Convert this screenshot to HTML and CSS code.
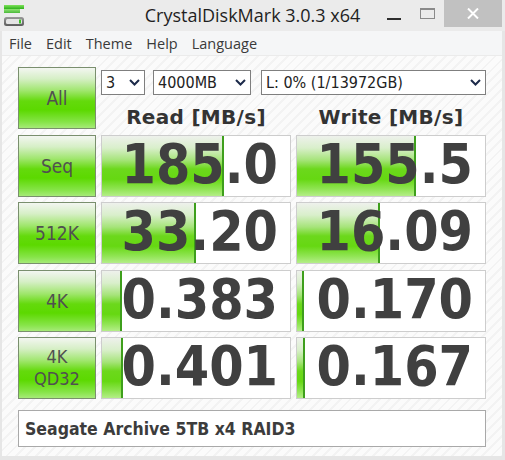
FILE: index.html
```html
<!DOCTYPE html>
<html>
<head>
<meta charset="utf-8">
<link rel="stylesheet" href="styles.css">
</head>
<body>
<div class="window">
  <div class="titlebar">
    <div class="iconcell">
      <svg class="appicon" width="22" height="22" viewBox="0 0 22 22">
        <defs>
          <linearGradient id="gg" x1="0" y1="0" x2="0" y2="1">
            <stop offset="0" stop-color="#7ee25a"/>
            <stop offset="1" stop-color="#2fb11c"/>
          </linearGradient>
          <linearGradient id="dg" x1="0" y1="0" x2="0" y2="1">
            <stop offset="0" stop-color="#9a9a9a"/>
            <stop offset="1" stop-color="#5c5c5c"/>
          </linearGradient>
        </defs>
        <rect x="0" y="0" width="20" height="4" fill="url(#gg)"/>
        <rect x="0" y="4" width="16" height="4" fill="url(#gg)" opacity="0.85"/>
        <rect x="0" y="12" width="20" height="9" rx="2.5" fill="url(#dg)"/>
        <rect x="2" y="14" width="16" height="5" rx="1.5" fill="#e4e4e4"/>
        <rect x="15" y="14.5" width="2" height="4" fill="#3cc226"/>
      </svg>
    </div>
    <div class="title">CrystalDiskMark 3.0.3 x64</div>
    <div class="controls">
      <div class="ctl min"><span class="minline"></span></div>
      <div class="ctl max"><span class="maxbox"></span></div>
      <div class="ctl close">
        <svg width="12" height="11" viewBox="0 0 12 11"><path d="M1 0.5 L11 10.5 M11 0.5 L1 10.5" stroke="#fff" stroke-width="2" fill="none"/></svg>
      </div>
    </div>
  </div>
  <div class="client">
    <div class="menubar">
      <span class="mi">File</span>
      <span class="mi">Edit</span>
      <span class="mi">Theme</span>
      <span class="mi">Help</span>
      <span class="mi">Language</span>
    </div>
    <div class="main">
      <div class="grid">
        <div class="btn comic">All</div>
        <div class="topcell">
          <div class="selects">
            <div class="sel s1"><span>3</span><svg class="chev" width="11" height="7" viewBox="0 0 11 7"><path d="M1 1 L5.5 5.5 L10 1" stroke="#1c2a4a" stroke-width="2" fill="none"/></svg></div>
            <div class="sel s2"><span>4000MB</span><svg class="chev" width="11" height="7" viewBox="0 0 11 7"><path d="M1 1 L5.5 5.5 L10 1" stroke="#1c2a4a" stroke-width="2" fill="none"/></svg></div>
            <div class="sel s3"><span>L: 0% (1/13972GB)</span><svg class="chev" width="11" height="7" viewBox="0 0 11 7"><path d="M1 1 L5.5 5.5 L10 1" stroke="#1c2a4a" stroke-width="2" fill="none"/></svg></div>
          </div>
          <div class="heads">
            <div class="head">Read [MB/s]</div>
            <div class="head">Write [MB/s]</div>
          </div>
        </div>

        <div class="btn comic">Seq</div>
        <div class="val"><div class="bar" style="width:122px"></div><span class="num">185.0</span></div>
        <div class="val"><div class="bar" style="width:119px"></div><span class="num">155.5</span></div>

        <div class="btn">512K</div>
        <div class="val"><div class="bar" style="width:94px"></div><span class="num">33.20</span></div>
        <div class="val"><div class="bar" style="width:83px"></div><span class="num">16.09</span></div>

        <div class="btn">4K</div>
        <div class="val"><div class="bar" style="width:20px"></div><span class="num">0.383</span></div>
        <div class="val"><div class="bar" style="width:7px"></div><span class="num">0.170</span></div>

        <div class="btn two">4K<br>QD32</div>
        <div class="val"><div class="bar" style="width:21px"></div><span class="num">0.401</span></div>
        <div class="val"><div class="bar" style="width:8px"></div><span class="num">0.167</span></div>
      </div>
      <div class="comment">Seagate Archive 5TB x4 RAID3</div>
    </div>
  </div>
</div>
</body>
</html>
```
FILE: styles.css
```css
* { box-sizing: border-box; }
html, body { margin: 0; padding: 0; }
body {
  width: 505px;
  height: 460px;
  overflow: hidden;
  background: #e6e6e6;
  font-family: "Open Sans", sans-serif;
}
.window {
  display: flex;
  flex-direction: column;
  height: 460px;
}
.titlebar {
  height: 31px;
  flex: none;
  display: grid;
  grid-template-columns: 1fr auto 1fr;
  background: #ebebeb;
}
.iconcell { display: flex; }
.appicon { margin: 5px 0 0 4px; }
.title {
  font-size: 18px;
  line-height: 31px;
  color: #1f1f1f;
  white-space: nowrap;
}
.controls {
  justify-self: end;
  display: flex;
  align-items: flex-start;
  margin-right: 3px;
}
.ctl {
  height: 27px;
  display: flex;
  justify-content: center;
}
.min { width: 32px; align-items: flex-start; }
.minline {
  display: block;
  width: 14px;
  height: 2px;
  background: #2e2e2e;
  margin-top: 18px;
}
.max { width: 34px; align-items: flex-start; }
.maxbox {
  display: block;
  width: 15px;
  height: 11px;
  border: 1px solid #8a8a8a;
  border-top-width: 2px;
  margin-top: 8px;
}
.close {
  width: 58px;
  background: #c1c1c1;
  align-items: center;
}
.client {
  flex: 1;
  display: flex;
  flex-direction: column;
  margin: 0 3px 4px 2px;
}
.menubar {
  height: 25px;
  flex: none;
  display: flex;
  background: #f5f6f7;
  border-bottom: 1px solid #ebebeb;
  font-size: 14.5px;
  color: #3a3a3a;
}
.mi {
  padding: 0 7px;
  line-height: 25px;
}
.main {
  flex: 1;
  padding: 11px 0 0 16px;
  background: repeating-linear-gradient(135deg, #fbfbfb 0 5px, #f3f3f3 5px 7px);
}
.grid {
  display: grid;
  grid-template-columns: 78px 190px 190px;
  grid-template-rows: repeat(5, 62px);
  column-gap: 5px;
  row-gap: 5.5px;
}
.btn {
  border: 1px solid #7a8f6e;
  background: linear-gradient(to bottom, #f3f6f1 0%, #d6efc6 18%, #9fe66c 38%, #64da0c 55%, #5cd900 70%, #86e448 90%, #a6ea78 100%);
  display: flex;
  align-items: center;
  justify-content: center;
  text-align: center;
  color: #505050;
  font-family: "DejaVu Sans Condensed", "DejaVu Sans", sans-serif;
  font-stretch: condensed;
  font-size: 19px;
}
.btn.two { line-height: 22px; font-size: 18px; }
.topcell {
  grid-column: 2 / 4;
  display: flex;
  flex-direction: column;
}
.selects {
  display: flex;
  margin-top: 3px;
  height: 25px;
}
.sel {
  height: 25px;
  border: 1px solid #7f7f7f;
  background: #fff;
  display: flex;
  align-items: center;
  justify-content: space-between;
  padding: 0 4px 0 4px;
  font-family: "DejaVu Sans Condensed", "DejaVu Sans", sans-serif;
  font-stretch: condensed;
  font-size: 16px;
  color: #222;
}
.s1 { width: 44px; margin-right: 8px; }
.s2 { width: 98px; margin-right: 10px; }
.s3 { width: 225px; }
.chev { flex: none; }
.heads {
  display: grid;
  grid-template-columns: 190px 190px;
  column-gap: 5px;
  padding-top: 10px;
}
.head {
  text-align: center;
  font-family: "DejaVu Sans", sans-serif;
  font-weight: bold;
  font-size: 20px;
  letter-spacing: 0.3px;
  line-height: 24px;
  color: #333;
}
.val {
  position: relative;
  border: 1px solid #cdcdcd;
  background: #fff;
  display: flex;
  align-items: center;
  justify-content: flex-end;
  padding: 0 12px 4px 0;
}
.bar {
  position: absolute;
  left: 0;
  top: 0;
  bottom: 0;
  background: linear-gradient(to bottom, #eef1ec 0%, #d9efcb 20%, #a6e47a 40%, #6cd81c 55%, #66d812 72%, #8fe452 88%, #b4ee88 100%);
  border-right: 2px solid #3e9f1c;
}
.num {
  position: relative;
  font-family: "DejaVu Sans Condensed", "DejaVu Sans", sans-serif;
  font-stretch: condensed;
  font-weight: bold;
  font-size: 55px;
  line-height: 56px;
  color: #404040;
}
.comment {
  margin-top: 11px;
  width: 468px;
  height: 37px;
  border: 1px solid #a9a9a9;
  background: #fff;
  padding-left: 6px;
  display: flex;
  align-items: center;
  font-family: "DejaVu Sans Condensed", "DejaVu Sans", sans-serif;
  font-stretch: condensed;
  font-weight: bold;
  font-size: 17.5px;
  color: #3c3c3c;
}
```
